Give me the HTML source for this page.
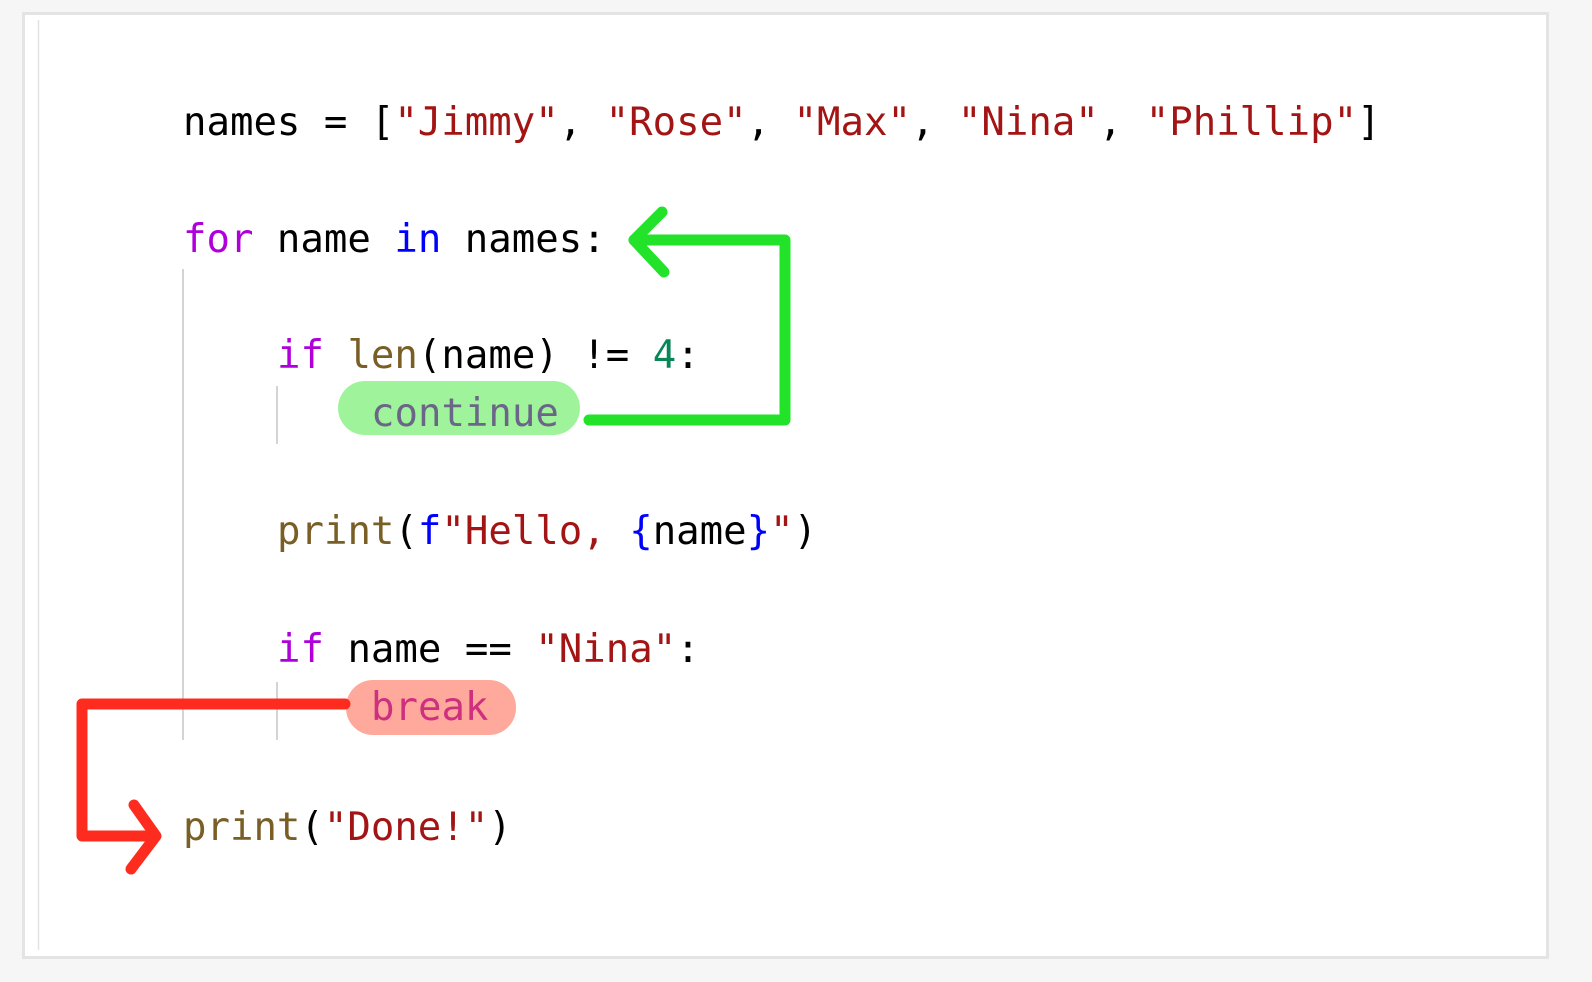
<!DOCTYPE html>
<html><head><meta charset="utf-8"><style>
html,body{margin:0;padding:0;background:#f7f7f7;width:1592px;height:982px;overflow:hidden}
svg{display:block}
text{font-family:"DejaVu Sans Mono","Liberation Mono",monospace;font-size:39px;white-space:pre}
</style></head><body>
<svg width="1592" height="982" viewBox="0 0 1592 982" xmlns="http://www.w3.org/2000/svg">
<rect x="0" y="0" width="1592" height="982" fill="#f6f6f6"/>
<rect x="23.5" y="13.5" width="1524" height="944" fill="#fff" stroke="#e4e4e4" stroke-width="3"/>
<line x1="38.5" y1="20" x2="38.5" y2="950" stroke="#e2e2e2" stroke-width="1.5"/>
<line x1="183" y1="269" x2="183" y2="740" stroke="#d4d4d4" stroke-width="2"/>
<line x1="277" y1="386" x2="277" y2="444" stroke="#d4d4d4" stroke-width="2"/>
<line x1="277" y1="682" x2="277" y2="740" stroke="#d4d4d4" stroke-width="2"/>
<rect x="338" y="381" width="242" height="54" rx="27" fill="#9ff49b"/>
<rect x="346" y="680" width="170" height="55" rx="27" fill="#fea99b"/>
<text x="183" y="135" xml:space="preserve"><tspan fill="#000">names = [</tspan><tspan fill="#a31515">"Jimmy"</tspan><tspan fill="#000">, </tspan><tspan fill="#a31515">"Rose"</tspan><tspan fill="#000">, </tspan><tspan fill="#a31515">"Max"</tspan><tspan fill="#000">, </tspan><tspan fill="#a31515">"Nina"</tspan><tspan fill="#000">, </tspan><tspan fill="#a31515">"Phillip"</tspan><tspan fill="#000">]</tspan></text>
<text x="183" y="252" xml:space="preserve"><tspan fill="#af00db">for</tspan><tspan fill="#000"> name </tspan><tspan fill="#0000ff">in</tspan><tspan fill="#000"> names:</tspan></text>
<text x="277" y="368" xml:space="preserve"><tspan fill="#af00db">if</tspan><tspan fill="#000"> </tspan><tspan fill="#795e26">len</tspan><tspan fill="#000">(name) != </tspan><tspan fill="#098658">4</tspan><tspan fill="#000">:</tspan></text>
<text x="371" y="426" fill="#6b6688">continue</text>
<text x="277" y="544" xml:space="preserve"><tspan fill="#795e26">print</tspan><tspan fill="#000">(</tspan><tspan fill="#0000ff">f</tspan><tspan fill="#a31515">"Hello, </tspan><tspan fill="#0000ff">{</tspan><tspan fill="#000">name</tspan><tspan fill="#0000ff">}</tspan><tspan fill="#a31515">"</tspan><tspan fill="#000">)</tspan></text>
<text x="277" y="662" xml:space="preserve"><tspan fill="#af00db">if</tspan><tspan fill="#000"> name == </tspan><tspan fill="#a31515">"Nina"</tspan><tspan fill="#000">:</tspan></text>
<text x="371" y="720" fill="#cf2f7f">break</text>
<text x="183" y="840" xml:space="preserve"><tspan fill="#795e26">print</tspan><tspan fill="#000">(</tspan><tspan fill="#a31515">"Done!"</tspan><tspan fill="#000">)</tspan></text>
<g fill="none" stroke="#22e22a" stroke-width="11" stroke-linecap="round" stroke-linejoin="round">
<path d="M589 420 H785 V240 H634"/>
<path d="M662 212 L634 240 L664 272"/>
</g>
<g fill="none" stroke="#fd2c1f" stroke-width="11" stroke-linecap="round" stroke-linejoin="round">
<path d="M345 704 H82 V836 H155"/>
<path d="M134 805 L156 836 L131 869"/>
</g>
</svg>
</body></html>
